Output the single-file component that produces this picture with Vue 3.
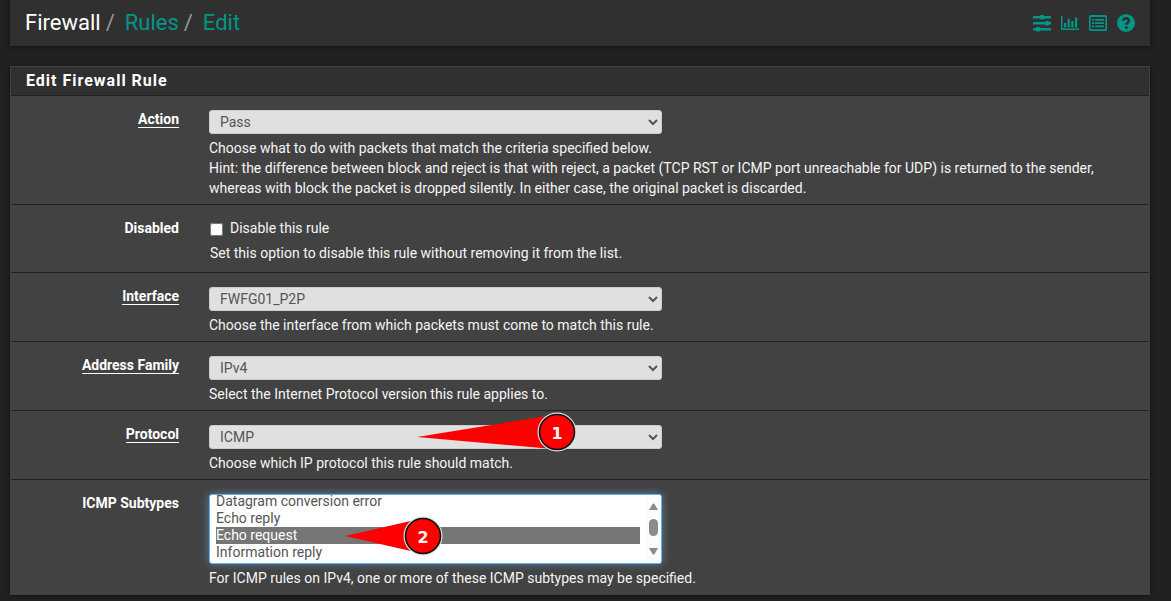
<script setup>
import { ref } from 'vue'

const action = ref('Pass')
const disabled = ref(false)
const iface = ref('FWFG01_P2P')
const family = ref('IPv4')
const protocol = ref('ICMP')
const subtypes = ref(['Echo request'])
const subtypeOptions = ['Datagram conversion error', 'Echo reply', 'Echo request', 'Information reply']
</script>

<template>
  <div class="page">
    <header class="topbar">
      <nav class="crumbs" aria-label="Breadcrumb">
        <span>Firewall</span><i class="slash">/</i><a href="#rules">Rules</a><i class="slash">/</i><a href="#edit">Edit</a>
      </nav>
      <div class="tools">
        <a href="#settings" aria-label="Settings">
          <svg viewBox="0 0 18 18">
            <path d="M0 2h18v2.500H0zM0 8h18v2.500H0zM0 14h18v2.500H0z" />
            <rect x="7" y="1" width="4" height="4.500" rx="1" />
            <rect x="12" y="7" width="4" height="4.500" rx="1" />
            <rect x="3" y="13" width="4" height="4.500" rx="1" />
          </svg>
        </a>
        <a href="#status" aria-label="Status">
          <svg viewBox="0 0 18 18">
            <path d="M0 2h1.500v12.500H18V16H0zM3 9h2.200v4.500H3zM6.600 5h2.200v8.500H6.600zM10.300 7h2.200v6.500h-2.200zM14 3.500h2.200v10H14z" />
          </svg>
        </a>
        <a href="#log" aria-label="Log">
          <svg viewBox="0 0 18 18">
            <path fill-rule="evenodd" d="M1.500 1h15A1.500 1.500 0 0 1 18 2.500v13a1.500 1.500 0 0 1-1.500 1.500h-15A1.500 1.500 0 0 1 0 15.500v-13A1.500 1.500 0 0 1 1.500 1zM1.600 3v12.300h14.800V3z" />
            <path d="M3 5h2v1.800H3zM3 8.200h2V10H3zM3 11.400h2v1.800H3zM6 5h9v1.800H6zM6 8.200h9V10H6zM6 11.400h9v1.800H6z" />
          </svg>
        </a>
        <a href="#help" aria-label="Help">
          <svg viewBox="0 0 18 18">
            <circle cx="9" cy="9" r="9" />
            <path class="mark" d="M6 6.800C6.500 5 7.600 4.400 9.100 4.400c1.600 0 2.900.9 2.900 2.400 0 2-2.700 2-2.700 4" />
            <path class="dot" d="M8 12.200h2.700v2.600H8z" />
          </svg>
        </a>
      </div>
    </header>

    <form class="panel">
      <h2>Edit Firewall Rule</h2>

      <div class="row">
        <label class="name" for="action"><span class="required">Action</span></label>
        <div class="field">
          <select id="action" v-model="action" class="drop"><option>Pass</option></select>
          <p>Choose what to do with packets that match the criteria specified below.<br>Hint: the difference between block and reject is that with reject, a packet (TCP RST or ICMP port unreachable for UDP) is returned to the sender, whereas with block the packet is dropped silently. In either case, the original packet is discarded.</p>
        </div>
      </div>

      <div class="row">
        <span class="name">Disabled</span>
        <div class="field option">
          <label class="check"><input v-model="disabled" type="checkbox">Disable this rule</label>
          <p>Set this option to disable this rule without removing it from the list.</p>
        </div>
      </div>

      <div class="row">
        <label class="name" for="iface"><span class="required">Interface</span></label>
        <div class="field">
          <select id="iface" v-model="iface" class="drop"><option>FWFG01_P2P</option></select>
          <p>Choose the interface from which packets must come to match this rule.</p>
        </div>
      </div>

      <div class="row">
        <label class="name" for="family"><span class="required">Address Family</span></label>
        <div class="field">
          <select id="family" v-model="family" class="drop"><option>IPv4</option></select>
          <p>Select the Internet Protocol version this rule applies to.</p>
        </div>
      </div>

      <div class="row">
        <label class="name" for="protocol"><span class="required">Protocol</span></label>
        <div class="field">
          <select id="protocol" v-model="protocol" class="drop"><option>ICMP</option></select>
          <svg class="callout first" width="160" height="40" viewBox="0 0 160 40">
            <path d="M0 25 136 3v34z" />
            <circle class="ring" cx="140" cy="20" r="17.500" />
            <circle class="edge" cx="140" cy="20" r="17.500" />
            <text x="140" y="27">1</text>
          </svg>
          <p>Choose which IP protocol this rule should match.</p>
        </div>
      </div>

      <div class="row">
        <label class="name" for="subtypes">ICMP Subtypes</label>
        <div class="field">
          <div class="listbox">
            <select id="subtypes" v-model="subtypes" multiple size="4">
              <option v-for="name in subtypeOptions" :key="name">{{ name }}</option>
            </select>
            <svg class="scroll" viewBox="0 0 15 68" aria-hidden="true">
              <path d="M3 15 6.500 9q1-1 2 0L12 15zM3 53h9l-3.500 6q-1 1-2 0z" />
              <rect x="3" y="24" width="9" height="17" rx="4.500" />
            </svg>
          </div>
          <svg class="callout second" width="98" height="40" viewBox="0 0 98 40">
            <path d="M0 20 70 4v32z" />
            <circle class="ring" cx="78" cy="20" r="17.500" />
            <circle class="edge" cx="78" cy="20" r="17.500" />
            <text x="78" y="27">2</text>
          </svg>
          <p>For ICMP rules on IPv4, one or more of these ICMP subtypes may be specified.</p>
        </div>
      </div>
    </form>
  </div>
</template>

<style>
body {
  background: #212121;
}
</style>

<style scoped>
.page {
  box-sizing: border-box;
  padding: 0 21px 6px 10px;
  color: #f5f5f5;
  font: 14px/20px Roboto, "Liberation Sans", sans-serif;
}
a {
  color: #009688;
  text-decoration: none;
}
.topbar {
  display: flex;
  justify-content: space-between;
  align-items: center;
  height: 46px;
  padding: 0 15px;
  background: #303030;
  box-shadow: 0 1px 4px rgba(0, 0, 0, 0.5);
}
.crumbs {
  color: #fff;
  font-size: 22px;
  line-height: 46px;
}
.slash {
  padding: 0 10px 0 5px;
  color: #999;
  font-style: normal;
}
.tools {
  display: flex;
  gap: 10px;
}
.tools svg {
  display: block;
  width: 18px;
  height: 18px;
  fill: currentColor;
}
.tools .mark {
  fill: none;
  stroke: #303030;
  stroke-width: 2.6;
}
.tools .dot {
  fill: #303030;
}
.panel {
  margin-top: 20px;
  border: 1px solid #424242;
  border-bottom: 0;
  background: #424242;
  box-shadow: 0 1px 4px rgba(0, 0, 0, 0.5);
}
h2 {
  margin: 0;
  padding: 4px 15px;
  border-bottom: 1px solid #212121;
  background: #303030;
  color: #fff;
  font-size: 16px;
  font-weight: 700;
  line-height: 20px;
  letter-spacing: 1px;
}
.row {
  display: grid;
  grid-template-columns: 168px 1fr;
  column-gap: 30px;
  padding: 14px 15px 6px 0;
  border-bottom: 1px solid #212121;
}
.row:last-child {
  border-bottom-color: #424242;
}
.name {
  margin-top: -1px;
  color: #fff;
  font-weight: 700;
  text-align: right;
}
.required {
  border-bottom: 1px solid #fff;
}
.field {
  position: relative;
}
.field p {
  margin: 4px 0 0;
}
.drop {
  display: block;
  box-sizing: border-box;
  width: 49%;
  height: 24px;
  padding: 0 6px;
  border: 1px solid #ccc;
  border-radius: 3px;
  background: #e0e0e0;
  color: #555;
  font: inherit;
}
.option {
  padding: 0 1px 3px;
  margin-top: -1px;
}
.option p {
  margin-top: 5px;
}
.check {
  display: flex;
  align-items: center;
  gap: 7px;
}
.check input {
  width: 13px;
  height: 13px;
  margin: 2px 0 0;
}
.listbox {
  display: flex;
  box-sizing: border-box;
  width: 49%;
  height: 70px;
  border: 1px solid #66afe9;
  border-radius: 3px;
  background: #fff;
  box-shadow: 0 0 8px rgba(102, 175, 233, 0.6);
  overflow: hidden;
}
.listbox select {
  flex: 1;
  min-width: 0;
  height: 68px;
  padding: 0 6px;
  border: 0;
  outline: 0;
  background: transparent;
  color: #555;
  font: inherit;
  line-height: 17px;
  overflow: hidden;
}
.listbox option {
  min-height: 17px;
  padding: 0;
  line-height: 17px;
}
.listbox option:first-child {
  margin-top: -2px;
}
.listbox option:checked {
  background: #767676;
  color: #fff;
}
.scroll {
  width: 15px;
  height: 68px;
  background: #fcfcfc;
  fill: #8b8b8b;
}
.callout {
  position: absolute;
  fill: #f00;
  pointer-events: none;
}
.first {
  top: -13px;
  left: 208px;
}
.second {
  top: 22px;
  left: 136px;
}
.ring {
  stroke: #ddd;
  stroke-width: 4;
}
.edge {
  stroke: #111;
  stroke-width: 1.6;
}
.callout text {
  fill: #fff;
  font: 700 16px "DejaVu Sans", sans-serif;
  text-anchor: middle;
}
</style>
